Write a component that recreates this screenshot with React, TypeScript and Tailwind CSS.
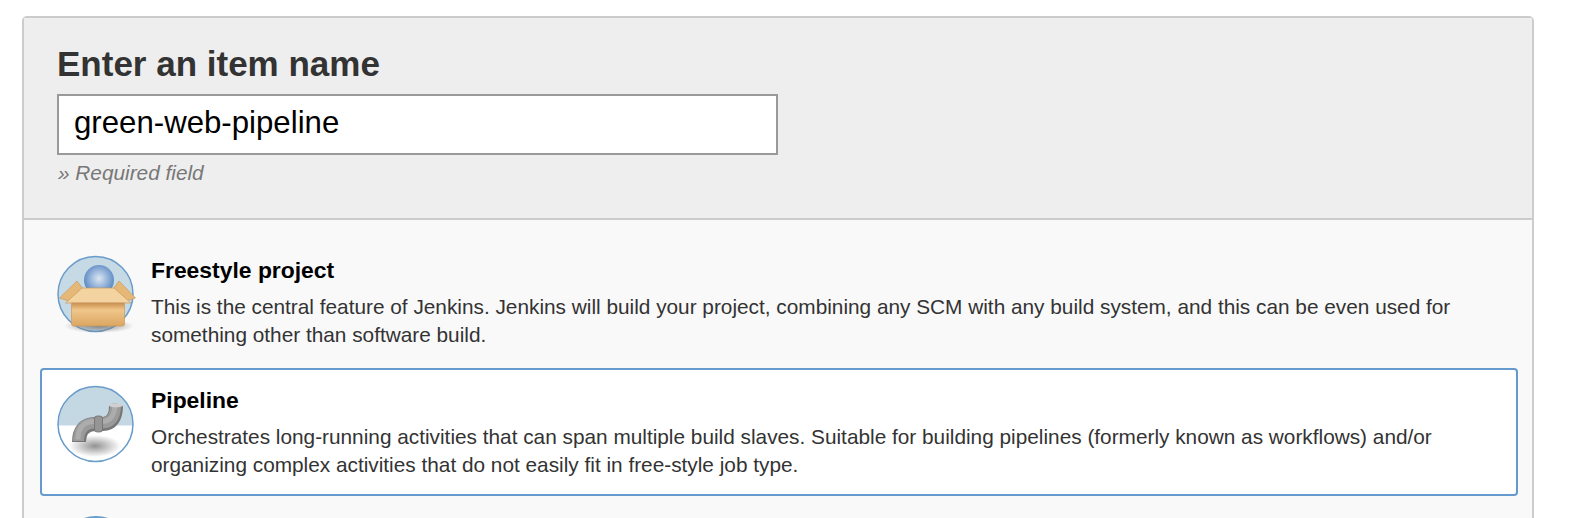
const Sans = "[font-family:'Liberation_Sans',Arial,sans-serif]";

const FreestyleIcon = () => (
  <svg width="80" height="80" viewBox="0 0 80 80" className="shrink-0 overflow-visible">
    <defs>
      <radialGradient id="ball" cx="0.5" cy="0.45" r="0.55">
        <stop offset="0" stopColor="#dbe6f2" />
        <stop offset="0.5" stopColor="#99b6db" />
        <stop offset="1" stopColor="#5585c0" />
      </radialGradient>
      <linearGradient id="box" x1="0" y1="0" x2="0" y2="1">
        <stop offset="0" stopColor="#c98f4e" />
        <stop offset="0.3" stopColor="#f0c68a" />
        <stop offset="1" stopColor="#dba662" />
      </linearGradient>
      <radialGradient id="boxShadow" cx="0.5" cy="0.5" r="0.5">
        <stop offset="0" stopColor="#777" stopOpacity="0.85" />
        <stop offset="1" stopColor="#777" stopOpacity="0" />
      </radialGradient>
    </defs>
    <circle cx="39.5" cy="40" r="37.5" fill="#c6dae5" stroke="#6a9ccb" strokeWidth="1.5" />
    <ellipse cx="43" cy="72" rx="35" ry="7" fill="url(#boxShadow)" />
    <circle cx="43" cy="26" r="15" fill="url(#ball)" />
    <path d="M21 27 L27 35 L13 47 L3.5 44 Z" fill="#e5b878" stroke="#c99a5f" strokeWidth="0.7" />
    <path d="M63 27 L57 35 L70 47 L79.5 44 Z" fill="#e5b878" stroke="#c99a5f" strokeWidth="0.7" />
    <path d="M26 34 L58 34 L75 49 L9.5 49 Z" fill="#f3d3a0" stroke="#c99a5f" strokeWidth="0.7" />
    <path d="M15.5 49 L68.5 49 L68.5 70 Q68.5 72 66.5 72 L17.5 72 Q15.5 72 15.5 70 Z" fill="url(#box)" stroke="#c99a5f" strokeWidth="0.7" />
  </svg>
);

const PipelineIcon = () => {
  const d = 'M23 58 C23 46 29 40 39 40 L47 40 C55 40 60 34 60 22';
  return (
    <svg width="80" height="80" viewBox="0 0 80 80" className="shrink-0">
      <defs>
        <clipPath id="disc">
          <circle cx="39.5" cy="40" r="37.5" />
        </clipPath>
        <radialGradient id="pipeShadow" cx="0.5" cy="0.5" r="0.5">
          <stop offset="0" stopColor="#777" stopOpacity="0.8" />
          <stop offset="1" stopColor="#777" stopOpacity="0" />
        </radialGradient>
      </defs>
      <circle cx="39.5" cy="40" r="37.5" fill="#fff" />
      <rect x="0" y="0" width="80" height="41.5" fill="#c3d8e3" clipPath="url(#disc)" />
      <ellipse cx="39" cy="62" rx="26" ry="11" fill="url(#pipeShadow)" />
      <path d={d} fill="none" stroke="#777777" strokeWidth="14" />
      <path d={d} fill="none" stroke="#9a9a9a" strokeWidth="11" transform="translate(-0.5 -1)" />
      <path d={d} fill="none" stroke="#acacac" strokeWidth="5" transform="translate(-1 -2.5)" />
      <ellipse cx="60" cy="21.5" rx="7" ry="1.8" fill="#cfcfcf" />
      <rect x="38.5" y="32" width="8" height="16" rx="2.5" fill="#959595" stroke="#666666" strokeWidth="0.7" />
      <circle cx="39.5" cy="40" r="37.5" fill="none" stroke="#6a9ccb" strokeWidth="1.5" />
    </svg>
  );
};

const items = [
  {
    name: 'Freestyle project',
    icon: <FreestyleIcon />,
    lines: [
      'This is the central feature of Jenkins. Jenkins will build your project, combining any SCM with any build system, and this can be even used for',
      'something other than software build.',
    ],
    active: false,
  },
  {
    name: 'Pipeline',
    icon: <PipelineIcon />,
    lines: [
      'Orchestrates long-running activities that can span multiple build slaves. Suitable for building pipelines (formerly known as workflows) and/or',
      'organizing complex activities that do not easily fit in free-style job type.',
    ],
    active: true,
  },
];

export default function App() {
  return (
    <div className={`h-[518px] overflow-hidden bg-white pl-[22px] pr-[42px] pt-[16px] ${Sans}`}>
      <div className="h-[600px] rounded-t-[5px] border-2 border-[#cccccc] bg-[#f9f9f9]">
        <div className="h-[202px] border-b-2 border-[#cccccc] bg-[#eeeeee] pl-[33px] pt-[24px]">
          <h1 className="text-[35px] leading-[44px] font-bold text-[#333333]">Enter an item name</h1>
          <input
            readOnly
            value="green-web-pipeline"
            className="mt-[8px] block h-[61px] w-[721px] border-2 border-[#999999] bg-white pb-[3px] pl-[15px] text-[31.2px] text-black outline-none"
          />
          <p className="mt-[5px] ml-[1px] text-[20.8px] leading-[26px] text-[#777777] italic">» Required field</p>
        </div>
        <div className="flex flex-col gap-[2px] pl-[16px] pr-[14px] pt-[18px]">
          {items.map((item) => (
            <div
              key={item.name}
              className={`flex h-[128px] items-start gap-[15px] rounded-[4px] border-2 pl-[14px] pt-[14px] ${
                item.active ? 'border-[#6699cc] bg-white' : 'border-transparent'
              }`}
            >
              {item.icon}
              <div className="pt-[1px]">
                <h2 className="text-[22.9px] leading-[30px] font-bold text-black">{item.name}</h2>
                <div className="mt-[8px] text-[20.8px] leading-[28px] text-[#333333]">
                  {item.lines.map((line) => (
                    <div key={line} className="whitespace-nowrap">{line}</div>
                  ))}
                </div>
              </div>
            </div>
          ))}
          <div className="pl-[18px] pt-[18px]">
            <div className="h-[76px] w-[76px] rounded-full bg-[#6a9ccb]" />
          </div>
        </div>
      </div>
    </div>
  );
}
